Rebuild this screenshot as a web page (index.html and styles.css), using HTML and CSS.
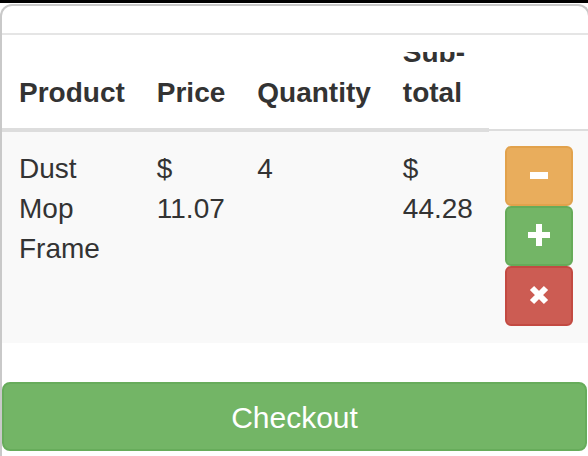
FILE: index.html
```html
<!DOCTYPE html>
<html lang="en">
<head>
<meta charset="utf-8">
<title>Cart</title>
<link rel="stylesheet" href="styles.css">
</head>
<body>
<div class="topbar"></div>
<div class="modal">
  <div class="modal-header"></div>
  <div class="modal-body">
    <div class="table-wrap">
      <table class="cart">
        <thead>
          <tr><th>Product</th><th>Price</th><th>Quantity</th><th>Sub-total</th></tr>
        </thead>
        <tbody>
          <tr>
            <td>Dust Mop Frame</td>
            <td>$ 11.07</td>
            <td>4</td>
            <td>$ 44.28</td>
            <td class="actions">
              <button class="btn btn-warning" aria-label="Decrease">
                <svg viewBox="0 0 24 24" width="24" height="24"><rect x="3" y="9" width="18" height="7" fill="#fff"/></svg>
              </button>
              <button class="btn btn-success" aria-label="Increase">
                <svg viewBox="0 0 24 24" width="24" height="24"><rect x="1" y="9" width="22" height="6" fill="#fff"/><rect x="9" y="1" width="6" height="22" fill="#fff"/></svg>
              </button>
              <button class="btn btn-danger" aria-label="Remove">
                <svg viewBox="0 0 24 24" width="24" height="24"><path d="M5 5 L19 19 M19 5 L5 19" stroke="#fff" stroke-width="6" stroke-linecap="butt"/></svg>
              </button>
            </td>
          </tr>
        </tbody>
      </table>
    </div>
  </div>
  <div class="modal-footer">
    <button class="btn-checkout">Checkout</button>
  </div>
</div>
</body>
</html>
```
FILE: styles.css
```css
html, body {
  margin: 0;
  padding: 0;
  overflow: hidden;
  background: #ffffff;
}

body {
  width: 588px;
  height: 456px;
  font-family: "Liberation Sans", Arial, Helvetica, sans-serif;
  color: #333333;
}

.topbar {
  height: 3px;
  background: #000000;
}

.modal {
  margin-top: 1px;
  width: 590px;
  box-sizing: border-box;
  border: 2px solid #c9c9c9;
  border-bottom: none;
  border-radius: 12px 12px 0 0;
  background: #ffffff;
  overflow: hidden;
}

.modal-header {
  height: 27px;
  border-bottom: 2px solid #e5e5e5;
}

.modal-body {
  padding-top: 17px;
}

.table-wrap {
  overflow: hidden;
}

.cart {
  margin-top: -36px;
  width: min-content;
  border-collapse: collapse;
  border-spacing: 0;
  font-size: 28px;
  line-height: 40px;
}

.cart th {
  padding: 17px 16px 15px 16px;
  text-align: left;
  vertical-align: bottom;
  font-weight: bold;
  border-bottom: 4px solid #dddddd;
}

.cart td {
  padding: 17px 16px 15px 16px;
  vertical-align: top;
  background: #f9f9f9;
  border-top: 2px solid #dddddd;
}

.cart th:first-child,
.cart td:first-child {
  padding-left: 17px;
}

.cart td.actions {
  padding: 15px 16px 17px 16px;
}

.btn {
  display: flex;
  align-items: center;
  justify-content: center;
  width: 68px;
  height: 60px;
  padding: 0;
  margin: 0;
  border: 2px solid transparent;
  border-radius: 6px;
  box-sizing: border-box;
}

.btn svg {
  display: block;
  margin-top: -3px;
}

.btn-warning {
  background: #e9ad5c;
  border-color: #e2a24c;
}

.btn-success {
  background: #73b566;
  border-color: #66ab59;
}

.btn-danger {
  background: #cc5c53;
  border-color: #c34a42;
}

.modal-footer {
  padding-top: 39px;
  padding-bottom: 40px;
}

.btn-checkout {
  display: block;
  width: 585px;
  height: 69px;
  margin: 0;
  padding: 3px 0 0 0;
  border: 2px solid #67ac5b;
  border-radius: 8px;
  background: #73b566;
  color: #ffffff;
  font-family: "Liberation Sans", Arial, Helvetica, sans-serif;
  font-size: 30px;
  line-height: 40px;
  text-align: center;
}
```
